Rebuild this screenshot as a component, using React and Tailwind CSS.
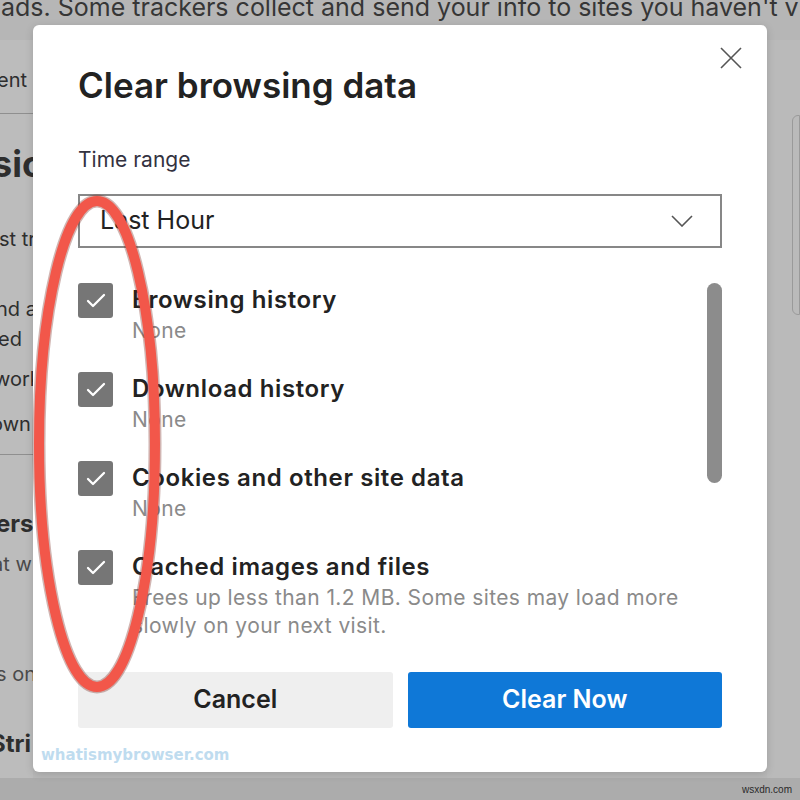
import { Check } from 'lucide-react';

const ITEMS = [
  { label: 'Browsing history', desc: ['None'] },
  { label: 'Download history', desc: ['None'] },
  { label: 'Cookies and other site data', desc: ['None'] },
  {
    label: 'Cached images and files',
    desc: ['Frees up less than 1.2 MB. Some sites may load more', 'slowly on your next visit.'],
  },
];

const font = "font-['Inter','Liberation_Sans',sans-serif]";

function BehindPage() {
  // dimmed settings page under the modal overlay
  return (
    <div className="flex flex-col h-full">
      <div className="h-[46px] shrink-0 overflow-hidden bg-[#b6b6b6] text-[#363636] text-[25px] whitespace-nowrap leading-[26px] -mt-[6px] pl-[1px]">
        ads. Some trackers collect and send your info to sites you haven't visited.
      </div>
      <div className="flex flex-1">
        <div className="w-[33px] overflow-hidden bg-[#bcbcbc] text-[#2e2e2e] text-[20px] leading-[30px] whitespace-nowrap">
          <div className="mt-[25px] h-[30px] -ml-[3px]">ent</div>
          <div className="mt-[18px] border-t border-[#8f8f8f]"></div>
          <div className="mt-[28px] h-[44px] -ml-[8px] text-[36px] font-bold leading-[44px]">sic</div>
          <div className="mt-[38px] h-[30px] -ml-[1px]">st tr</div>
          <div className="mt-[40px] h-[30px] -ml-[4px]">nd a</div>
          <div className="h-[30px] -ml-[2px]">ed</div>
          <div className="mt-[10px] h-[30px] -ml-[6px]">work</div>
          <div className="mt-[15px] h-[30px] -ml-[9px]">own</div>
          <div className="mt-[15px] border-t border-[#8f8f8f]"></div>
          <div className="mt-[54px] h-[30px] -ml-[4px] text-[24px] font-bold">ers</div>
          <div className="mt-[10px] h-[30px] -ml-[8px] text-[#4a4a4a]">at w</div>
          <div className="mt-[80px] h-[30px] -ml-[4px] text-[#4a4a4a]">s on</div>
          <div className="mt-[40px] h-[30px] -ml-[10px] text-[24px] font-bold">Stri</div>
        </div>
        <div className="flex-1 bg-[#b8b8b8]"></div>
        <div className="w-[33px] bg-[#bababa] pt-[75px] pl-[25px]">
          <div className="h-[200px] border border-[#9a9a9a] rounded-l-md"></div>
        </div>
      </div>
      <div className="h-[22px] shrink-0 bg-[#acacac] flex justify-end items-center pr-[8px]">
        <span className="text-[10px] text-[#2a2a2a] font-['Liberation_Sans',sans-serif]">wsxdn.com</span>
      </div>
    </div>
  );
}

function Row({ label, desc }) {
  return (
    <div className="flex gap-[19px]">
      <div className="w-[35px] h-[35px] shrink-0 rounded-[3px] bg-[#767676] flex items-center justify-center">
        <Check className="w-[24px] h-[24px] text-white" strokeWidth={2.3} />
      </div>
      <div className="pt-[3px]">
        <div className="text-[24px] leading-[28px] font-semibold tracking-[0.6px] text-[#222]">{label}</div>
        <div className="mt-[3px]">
          {desc.map((d) => (
            <div key={d} className="text-[21px] leading-[28px] tracking-[0.4px] text-[#8a8a8a]">{d}</div>
          ))}
        </div>
      </div>
    </div>
  );
}

export default function App() {
  return (
    <div className={`relative w-[800px] h-[800px] overflow-hidden ${font}`}>
      <BehindPage />

      <div className="absolute left-[33px] top-[25px] w-[734px] h-[747px] bg-white rounded-md shadow-[0_2px_8px_rgba(0,0,0,0.15)] pl-[45px] pr-[45px] flex flex-col">
        <button className="absolute right-[25px] top-[22px] w-[22px] h-[22px]">
          <svg viewBox="0 0 22 22" className="w-[22px] h-[22px]" fill="none" stroke="#555" strokeWidth="1.6">
            <path d="M1 1L21 21M21 1L1 21" />
          </svg>
        </button>

        <h1 className="mt-[40px] text-[35px] leading-[40px] font-semibold text-[#222]">
          Clear browsing data
        </h1>

        <div className="mt-[43px] text-[21px] leading-[24px] text-[#33323f]">Time range</div>

        <div className="mt-[22px] h-[54px] shrink-0 border-2 border-[#878787] flex items-center justify-between pl-[20px] pr-[27px]">
          <span className="text-[25px] text-[#222]">Last Hour</span>
          <svg viewBox="0 0 22 12" className="w-[22px] h-[12px]" fill="none" stroke="#555" strokeWidth="1.6">
            <path d="M1 1L11 11L21 1" />
          </svg>
        </div>

        <div className="mt-[35px] flex gap-[14px]">
          <div className="flex-1 flex flex-col gap-[27px]">
            {ITEMS.map((it) => (
              <Row key={it.label} {...it} />
            ))}
          </div>
          <div className="w-[15px] h-[200px] rounded-full bg-[#8c8c8c]"></div>
        </div>

        <div className="mt-auto mb-[44px] flex gap-[15px]">
          <button className="flex-1 h-[56px] rounded-[3px] bg-[#efefef] text-[25px] font-semibold text-[#222]">
            Cancel
          </button>
          <button className="flex-1 h-[56px] rounded-[3px] bg-[#0f78d7] text-[25px] font-semibold text-white">
            Clear Now
          </button>
        </div>

        <div className="absolute left-[8px] bottom-[7px] text-[15px] leading-[20px] font-bold text-[#bfdcef] font-['DejaVu_Sans',sans-serif]">
          whatismybrowser.com
        </div>
      </div>

      <svg className="absolute left-0 top-0 w-[800px] h-[800px] pointer-events-none" viewBox="0 0 800 800" fill="none">
        <ellipse cx="97" cy="444" rx="58" ry="243" stroke="#7a2a22" strokeOpacity="0.35" strokeWidth="13" />
        <ellipse cx="97" cy="444" rx="58" ry="243" stroke="#f2574a" strokeWidth="10" />
      </svg>
    </div>
  );
}
